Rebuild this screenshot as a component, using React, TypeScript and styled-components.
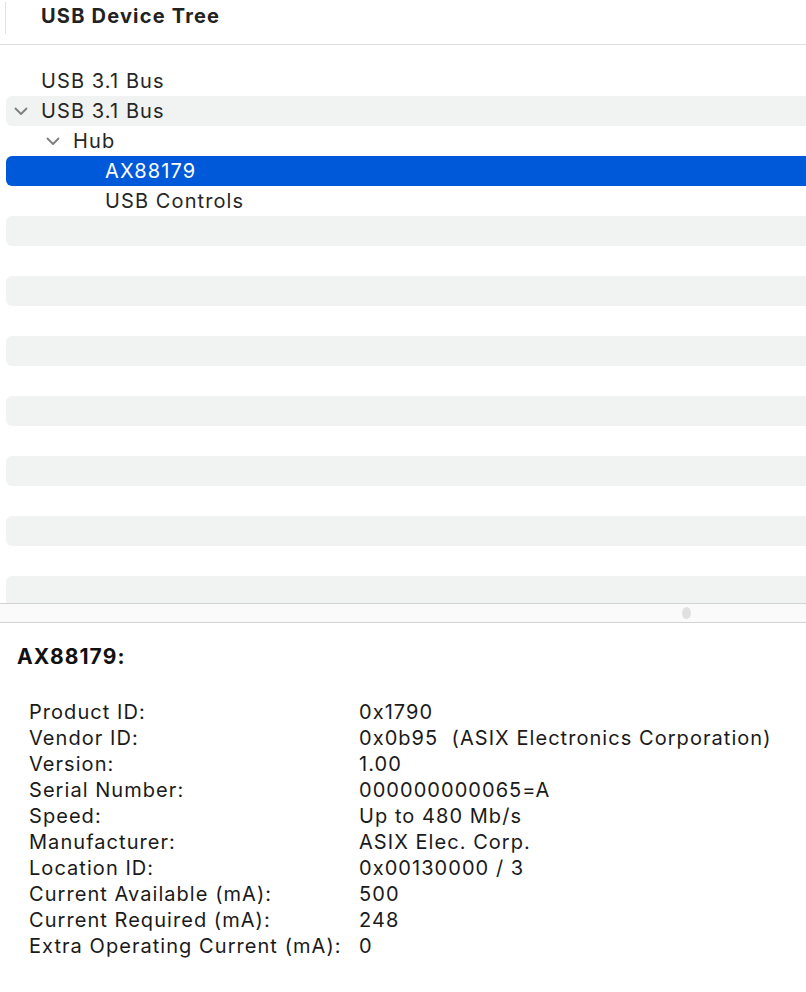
import React from "react";
import styled, { createGlobalStyle } from "styled-components";

const GlobalStyle = createGlobalStyle`
  html, body {
    margin: 0;
    padding: 0;
    background: #ffffff;
  }
  body {
    font-family: Inter, "Liberation Sans", Arial, sans-serif;
    color: #262626;
  }
`;

const StPage = styled.div`
  display: flex;
  flex-direction: column;
  width: 806px;
  height: 992px;
  overflow: hidden;
  background: #ffffff;
`;

const StHeader = styled.div`
  position: relative;
  display: flex;
  align-items: center;
  height: 44px;
  padding-left: 41px;
  border-bottom: 1px solid #dedede;
  box-sizing: content-box;
  &::before {
    content: "";
    position: absolute;
    left: 5px;
    top: 2px;
    width: 1px;
    height: 32px;
    background: #e2e2e2;
  }
`;

const StHeaderTitle = styled.h1`
  margin: 0 0 12px;
  font-size: 20px;
  font-weight: 700;
  letter-spacing: 1.2px;
  color: #222222;
`;

const StTree = styled.div`
  display: flex;
  flex-direction: column;
  height: 558px;
  padding-top: 21px;
  box-sizing: border-box;
  overflow: hidden;
`;

interface IStRowProps {
  $striped: boolean;
  $selected: boolean;
  $level: number;
}

const StRow = styled.div<IStRowProps>`
  display: flex;
  align-items: center;
  flex-shrink: 0;
  height: 30px;
  margin-left: 6px;
  padding-left: ${({ $level }) => 35 + $level * 32}px;
  border-radius: 6px 0 0 6px;
  position: relative;
  font-size: 20px;
  letter-spacing: 1.1px;
  color: ${({ $selected }) => ($selected ? "#ffffff" : "#262626")};
  background-color: ${({ $selected, $striped }) =>
    $selected ? "#0059d9" : $striped ? "#f1f2f2" : "transparent"};
`;

const StChevron = styled.svg<{ $left: number }>`
  position: absolute;
  left: ${({ $left }) => $left}px;
  top: 10px;
`;

const StSplitter = styled.div`
  display: flex;
  align-items: center;
  height: 18px;
  border-top: 1px solid #d2d2d2;
  border-bottom: 1px solid #d2d2d2;
  background: #fafafa;
`;

const StHandle = styled.div`
  width: 9px;
  height: 12px;
  margin-left: 682px;
  border-radius: 50%;
  background: #e0e0e0;
`;

const StDetails = styled.div`
  padding: 21px 0 0 17px;
`;

const StDetailsTitle = styled.h2`
  margin: 0 0 30px;
  font-size: 21px;
  font-weight: 700;
  letter-spacing: 1.1px;
  color: #111111;
`;

const StGrid = styled.div`
  display: grid;
  grid-template-columns: 330px 1fr;
  padding-left: 12px;
  font-size: 20px;
  line-height: 26px;
  letter-spacing: 1.05px;
  color: #1a1a1a;
  white-space: pre;
`;

interface ITreeItem {
  label: string;
  level: number;
  expanded?: boolean;
}

const treeItems: ITreeItem[] = [
  { label: "USB 3.1 Bus", level: 0 },
  { label: "USB 3.1 Bus", level: 0, expanded: true },
  { label: "Hub", level: 1, expanded: true },
  { label: "AX88179", level: 2 },
  { label: "USB Controls", level: 2 },
];

const details: [string, string][] = [
  ["Product ID:", "0x1790"],
  ["Vendor ID:", "0x0b95  (ASIX Electronics Corporation)"],
  ["Version:", "1.00"],
  ["Serial Number:", "000000000065=A"],
  ["Speed:", "Up to 480 Mb/s"],
  ["Manufacturer:", "ASIX Elec. Corp."],
  ["Location ID:", "0x00130000 / 3"],
  ["Current Available (mA):", "500"],
  ["Current Required (mA):", "248"],
  ["Extra Operating Current (mA):", "0"],
];

const App = () => {
  const rows = Array.from({ length: 18 }, (_, i) => treeItems[i]);
  return (
    <StPage>
      <GlobalStyle />
      <StHeader>
        <StHeaderTitle>USB Device Tree</StHeaderTitle>
      </StHeader>
      <StTree>
        {rows.map((item, i) => (
          <StRow
            key={i}
            $striped={i % 2 === 1}
            $selected={i === 3}
            $level={item ? item.level : 0}
          >
            {item?.expanded && (
              <StChevron
                $left={8 + item.level * 32}
                width="14"
                height="10"
                viewBox="0 0 14 10"
                fill="none"
              >
                <path
                  d="M1.5 2.5 L7 8 L12.5 2.5"
                  stroke="#7d7d7d"
                  strokeWidth="1.8"
                  strokeLinecap="round"
                  strokeLinejoin="round"
                />
              </StChevron>
            )}
            {item?.label}
          </StRow>
        ))}
      </StTree>
      <StSplitter>
        <StHandle />
      </StSplitter>
      <StDetails>
        <StDetailsTitle>AX88179:</StDetailsTitle>
        <StGrid>
          {details.map(([label, value]) => (
            <React.Fragment key={label}>
              <span>{label}</span>
              <span>{value}</span>
            </React.Fragment>
          ))}
        </StGrid>
      </StDetails>
    </StPage>
  );
};

export default App;
